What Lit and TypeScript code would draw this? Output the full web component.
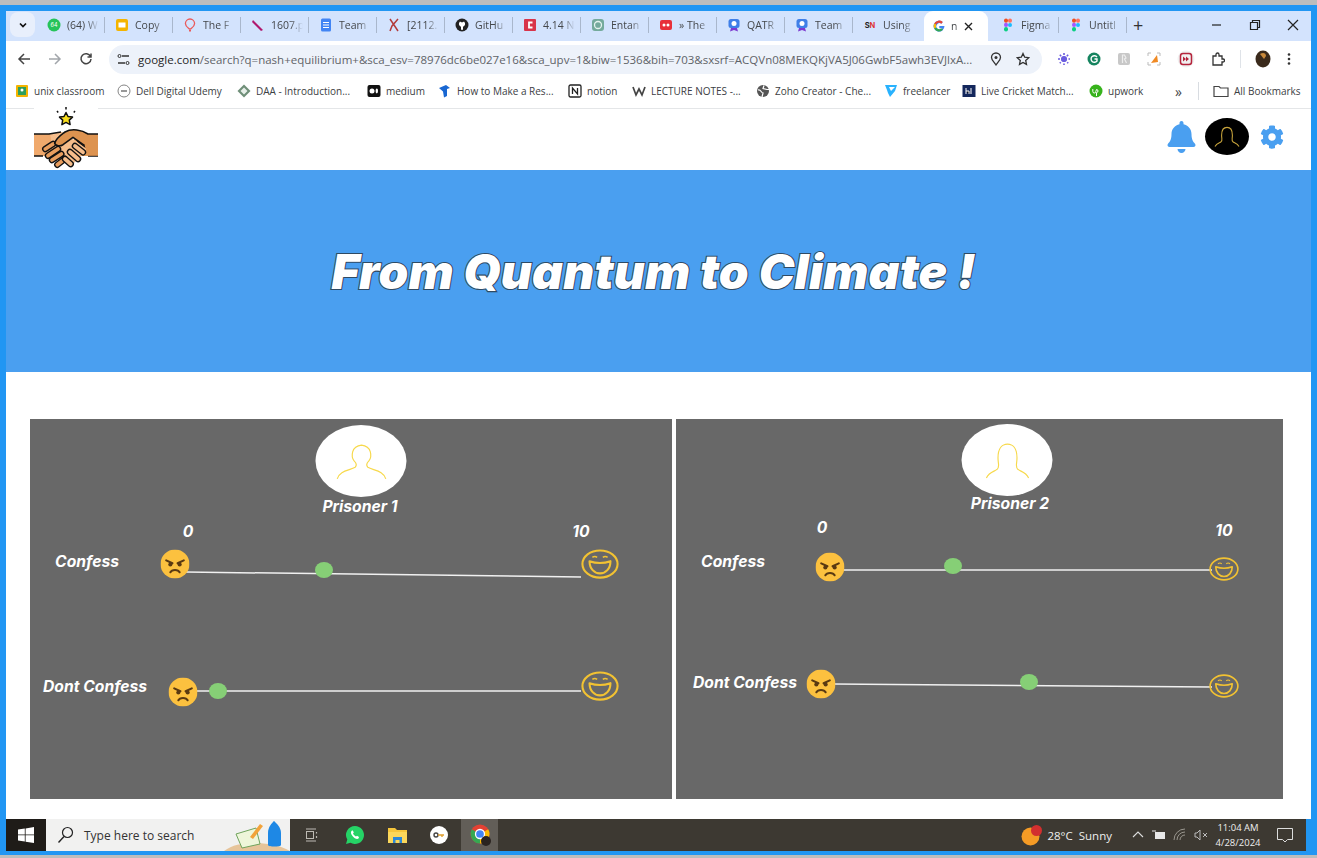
import { LitElement, html, css, svg } from 'lit';
import { customElement } from 'lit/decorators.js';

const favicons: Record<string, unknown> = {
  whatsapp: svg`<circle cx="7" cy="7" r="6.5" fill="#25c35a"/><text x="7" y="9" font-size="5.5" fill="#fff" text-anchor="middle" font-family="Inter">64</text>`,
  slides: svg`<rect x="1" y="1" width="12" height="12" rx="2" fill="#f4b400"/><rect x="3.5" y="4.5" width="7" height="5" fill="#fff"/>`,
  balloon: svg`<path d="M7 1a4.6 4.6 0 0 1 4.6 4.6C11.6 8.5 8.6 10 7.6 11H6.4C5.4 10 2.4 8.5 2.4 5.6A4.6 4.6 0 0 1 7 1z" fill="none" stroke="#ea5a5a" stroke-width="1.3"/><path d="M6 12h2v1.6H6z" fill="#ea5a5a"/>`,
  stroke: svg`<path d="M2 2l10 10-2 1L1 4z" fill="#b0186e"/>`,
  docs: svg`<rect x="2" y="0.5" width="10" height="13" rx="1.5" fill="#4285f4"/><path d="M4 4.5h6M4 7h6M4 9.5h6" stroke="#fff" stroke-width="1"/>`,
  arxiv: svg`<path d="M3 1l8 12M11 1L5 8l-2 5" fill="none" stroke="#b33a3a" stroke-width="1.5"/>`,
  github: svg`<circle cx="7" cy="7" r="6.5" fill="#222"/><path d="M4 5l1-1.5 1.2.7h1.6L9 3.5 10 5c.5 2-1 3.5-2 3.7v3H6V8.7C5 8.5 3.500 7 4 5z" fill="#fff"/>`,
  red: svg`<rect x="1" y="1" width="12" height="12" rx="1" fill="#d8344a"/><path d="M9.500 4.500H6v5h3.500" fill="none" stroke="#fff" stroke-width="1.800"/>`,
  openai: svg`<rect x="1" y="1" width="12" height="12" rx="3" fill="#74aa9c"/><circle cx="7" cy="7" r="3.500" fill="none" stroke="#e5f3ef" stroke-width="1.300"/>`,
  youtube: svg`<rect x="1" y="2" width="12" height="10" rx="2" fill="#e8303a"/><circle cx="5" cy="7" r="1.500" fill="#fff"/><circle cx="9" cy="7" r="1.500" fill="#fff"/>`,
  badge: svg`<rect x="1.500" y="1" width="11" height="9" rx="2.500" fill="#3f7fe8"/><circle cx="7" cy="5.500" r="2.500" fill="#fff"/><path d="M4 10l-1 3.500L7 12l4 1.500-1-3.500z" fill="#7d3ad0"/>`,
  sn: svg`<text x="7" y="9.500" font-size="7.500" font-weight="700" text-anchor="middle" fill="#222" font-family="Inter">S<tspan fill="#d33">N</tspan></text>`,
  google: svg`<path d="M12.500 7H7.300v2.200h3A3.200 3.200 0 1 1 9.300 4.700l1.500-1.600A5.500 5.500 0 1 0 12.500 7z" fill="#4285f4"/><path d="M2.200 4.500A5.500 5.500 0 0 1 10.800 3.100L9.300 4.700A3.200 3.200 0 0 0 4.200 5.600z" fill="#ea4335"/><path d="M2.200 9.500a5.500 5.500 0 0 1 0-5l2 1.100a3.200 3.200 0 0 0 0 2.800z" fill="#fbbc05"/><path d="M2.200 9.500l2-1.100a3.200 3.200 0 0 0 5 .9l1.800 1.500a5.500 5.500 0 0 1-8.800-1.300z" fill="#34a853"/>`,
  figma: svg`<rect x="3" y="0.500" width="4" height="4.300" rx="2" fill="#f24e1e"/><rect x="7" y="0.500" width="4" height="4.300" rx="2" fill="#ff7262"/><rect x="3" y="4.800" width="4" height="4.300" rx="2" fill="#a259ff"/><circle cx="9" cy="7" r="2" fill="#1abcfe"/><rect x="3" y="9.100" width="4" height="4.300" rx="2" fill="#0acf83"/>`,
};

const bookmarkIcons: Record<string, unknown> = {
  classroom: svg`<rect x="1" y="1" width="12" height="12" rx="1" fill="#f4b400"/><rect x="3" y="3" width="8" height="8" fill="#2f9e5c"/><circle cx="7" cy="6" r="1.500" fill="#fff"/>`,
  dell: svg`<circle cx="7" cy="7" r="6" fill="none" stroke="#777" stroke-width="0.900"/><path d="M4 7h6" stroke="#777" stroke-width="1.500"/>`,
  daa: svg`<path d="M7 .5L13.500 7 7 13.500.5 7z" fill="#6f8f78"/><path d="M7 3.500L10.500 7 7 10.500 3.500 7z" fill="#e7efe9"/>`,
  medium: svg`<rect x="0.500" y="1" width="13" height="12" rx="2" fill="#111"/><circle cx="5" cy="7" r="2.500" fill="#fff"/><ellipse cx="9.800" cy="7" rx="1.200" ry="2.400" fill="#fff"/>`,
  how: svg`<path d="M1 4l7-3 4 3-3 1v7l-3 1.500-1-6z" fill="#1967d2"/>`,
  notion: svg`<rect x="1" y="1" width="12" height="12" rx="1.500" fill="#fff" stroke="#222" stroke-width="1.300"/><path d="M4.500 10V4l5 6V4" fill="none" stroke="#222" stroke-width="1.300"/>`,
  w: svg`<path d="M1 3l3 8 3-6 3 6 3-8" fill="none" stroke="#444" stroke-width="1.700"/>`,
  zoho: svg`<circle cx="7" cy="7" r="6" fill="#555"/><path d="M2 6c3-1 3 3 5 3l-1 4M8 1.500l-1 3 4 1 2 0" fill="none" stroke="#fff" stroke-width="1.200"/>`,
  freelancer: svg`<path d="M1 1h12l-2 6-5 6-2-4-1-3z" fill="#29b2fe"/><path d="M5 3h6L7 7z" fill="#fff"/>`,
  cricket: svg`<rect x="0.500" y="1" width="13" height="12" fill="#14275c"/><path d="M4 4v6M4 7h3v3M9 4v6" stroke="#fff" stroke-width="1"/>`,
  upwork: svg`<circle cx="7" cy="7" r="6.500" fill="#37b31c"/><path d="M3.800 5v2.500a1.500 1.500 0 0 0 3 0L7.500 5.500a1.500 1.500 0 1 1 0 3V12" fill="none" stroke="#fff" stroke-width="1"/>`,
};

const tabs = [
  ['whatsapp', '(64) W'], ['slides', 'Copy'], ['balloon', 'The F'], ['stroke', '1607.p'],
  ['docs', 'Team'], ['arxiv', '[2112.'], ['github', 'GitHu'], ['red', '4.14 N'],
  ['openai', 'Entan'], ['youtube', '» The'], ['badge', 'QATR'], ['badge', 'Team'], ['sn', 'Using'],
];

const bookmarks = [
  ['classroom', 'unix classroom', 69], ['dell', 'Dell Digital Udemy', 87], ['daa', 'DAA - Introduction...', 97],
  ['medium', 'medium', 38], ['how', 'How to Make a Res...', 97], ['notion', 'notion', 31], ['w', 'LECTURE NOTES -...', 91],
  ['zoho', 'Zoho Creator - Che...', 95], ['freelancer', 'freelancer', 45], ['cricket', 'Live Cricket Match...', 94], ['upwork', 'upwork', 35],
] as const;

type Slider = {
  label: [number, number]; text: string; angry: [number, number];
  line: [number, number, number, number]; thumb: [number, number]; happy: [number, number, number, number];
};
type Prisoner = {
  name: string; hair: 'short' | 'long'; avatar: [number, number]; nameAt: [number, number];
  zero: [number, number]; ten: [number, number]; rows: Slider[];
};

// page coordinates of the prototype, measured minus the panel's own origin
const prisoners: Prisoner[] = [
  {
    name: 'Prisoner 1', hair: 'short', avatar: [331, 42], nameAt: [330, 88], zero: [158, 113], ten: [551, 113],
    rows: [
      { label: [57, 143], text: 'Confess', angry: [145, 145], line: [156, 153, 551, 158], thumb: [294, 151], happy: [570, 145, 19, 15] },
      { label: [65, 268], text: 'Dont Confess', angry: [153, 273], line: [165, 272, 551, 272], thumb: [188, 272], happy: [570, 267, 19, 15] },
    ],
  },
  {
    name: 'Prisoner 2', hair: 'long', avatar: [331, 41], nameAt: [334, 85], zero: [146, 109], ten: [548, 112],
    rows: [
      { label: [57, 143], text: 'Confess', angry: [154, 148], line: [167, 151, 536, 151], thumb: [277, 147], happy: [548, 150, 15, 12] },
      { label: [69, 264], text: 'Dont Confess', angry: [145, 265], line: [157, 265, 536, 268], thumb: [353, 263], happy: [548, 267, 15, 12] },
    ],
  },
];

const personPaths = {
  short: 'M2 34C4 26 14 26 19 23C21 21 20 19 18 17C15 13 15 3 25 2C35 3 35 13 32 17C30 19 29 21 31 23C36 26 46 26 48 34',
  long: 'M5 34C8 28 13 28 15 26C18 24 16 21 16 15C16 6 20 2 25 2C30 2 34 6 34 15C34 21 32 24 35 26C37 28 42 28 45 34',
};

// [tip x, tip y, base x, base y] for the fingers of the handshake logo
const darkFingers = [[11.3, 44, 19, 39], [14, 50.7, 24, 44], [18, 55, 27.3, 49], [23.3, 59.7, 30.7, 54]];
const lightFingers = [[52.3, 39.7, 46, 35], [49, 47.3, 41, 41], [44, 54, 36, 47], [36.7, 59, 31, 54]];

const finger = (f: number[], color: string) => svg`
  <line x1=${f[0]} y1=${f[1]} x2=${f[2]} y2=${f[3]} stroke="#111" stroke-width="6.500" stroke-linecap="round" />
  <line x1=${f[0]} y1=${f[1]} x2=${f[2]} y2=${f[3]} stroke=${color} stroke-width="3.800" stroke-linecap="round" />`;

@customElement('prisoner-panel')
export class PrisonerPanel extends LitElement {
  static properties = { data: { attribute: false } };
  data!: Prisoner;

  static styles = css`
    :host {
      display: block;
      position: relative;
      background: #686868;
      color: #fff;
      font: italic 700 15.700px Inter, "Liberation Sans", sans-serif;
      overflow: hidden;
    }
    .at {
      position: absolute;
      transform: translate(-50%, -50%);
      white-space: nowrap;
      line-height: 1;
    }
    .lines {
      position: absolute;
      inset: 0;
      width: 100%;
      height: 100%;
    }
    .avatar {
      width: 91px;
      height: 72px;
      border-radius: 50%;
      background: #fff;
      display: flex;
      align-items: center;
      justify-content: center;
    }
    .avatar svg {
      width: 54px;
      height: 38px;
      margin-top: 2px;
    }
    .thumb {
      width: 18px;
      height: 16px;
      border-radius: 50%;
      background: #86cf76;
    }
    .angry {
      width: 29px;
      height: 29px;
      display: block;
    }
    .happy {
      display: block;
    }
  `;

  private angry(x: number, y: number) {
    return html`<svg class="at angry" style="left:${x}px;top:${y}px" viewBox="0 0 28 28">
      <circle cx="14" cy="14" r="14" fill="#fcc13f" />
      <path d="M5.500 10.500l6 2.800M22.500 10.500l-6 2.800" stroke="#5a3a12" stroke-width="2" stroke-linecap="round" />
      <circle cx="9.500" cy="14.500" r="2" fill="#5a3a12" />
      <circle cx="18.500" cy="14.500" r="2" fill="#5a3a12" />
      <path d="M9.500 22c1.500-3 7.500-3 9 0" fill="none" stroke="#5a3a12" stroke-width="2" stroke-linecap="round" />
    </svg>`;
  }

  private happy(x: number, y: number, rx: number, ry: number) {
    return html`<svg class="at happy" style="left:${x}px;top:${y}px;width:${rx * 2}px;height:${ry * 2}px"
      viewBox="0 0 40 32" preserveAspectRatio="none">
      <ellipse cx="20" cy="16" rx="18.500" ry="14.500" fill="none" stroke="#f2c232" stroke-width="2.200" />
      <path d="M12 9q2.500-2 5 0M23 9q2.500-2 5 0" fill="none" stroke="#f2c232" stroke-width="1.600" />
      <path d="M9 13Q20 17 31 13C31 21 26 26 20 26S9 21 9 13z" fill="none" stroke="#f2c232" stroke-width="2.200" stroke-linejoin="round" />
    </svg>`;
  }

  render() {
    const d = this.data;
    return html`
      <svg class="lines">
        ${d.rows.map((r) => svg`<line x1=${r.line[0]} y1=${r.line[1]} x2=${r.line[2]} y2=${r.line[3]} stroke="#f1f1f1" stroke-width="1.500" />`)}
      </svg>
      <div class="at avatar" style="left:${d.avatar[0]}px;top:${d.avatar[1]}px">
        <svg viewBox="0 0 50 36"><path d=${personPaths[d.hair]} fill="none" stroke="#f7d94c" stroke-width="1.100" /></svg>
      </div>
      <div class="at" style="left:${d.nameAt[0]}px;top:${d.nameAt[1]}px">${d.name}</div>
      <div class="at" style="left:${d.zero[0]}px;top:${d.zero[1]}px">0</div>
      <div class="at" style="left:${d.ten[0]}px;top:${d.ten[1]}px">10</div>
      ${d.rows.map((r) => html`
        <div class="at" style="left:${r.label[0]}px;top:${r.label[1]}px">${r.text}</div>
        ${this.angry(r.angry[0], r.angry[1])}
        <div class="at thumb" style="left:${r.thumb[0]}px;top:${r.thumb[1]}px"></div>
        ${this.happy(r.happy[0], r.happy[1], r.happy[2], r.happy[3])}
      `)}
    `;
  }
}

@customElement('app-root')
export class AppRoot extends LitElement {
  static styles = css`
    :host {
      display: block;
      width: 1317px;
      height: 858px;
      overflow: hidden;
      background: #bdbdbd;
      font-family: "Open Sans", "Noto Sans", sans-serif;
      box-sizing: border-box;
      padding: 5px 0 3px;
    }
    .frame {
      height: 100%;
      box-sizing: border-box;
      background: #2196f3;
      padding: 6px 6px 4px 6px;
      display: flex;
      flex-direction: column;
    }
    svg {
      display: block;
      flex: none;
    }

    /* tab strip */
    .tabstrip {
      height: 30px;
      box-sizing: border-box;
      padding-bottom: 3px;
      flex: none;
      background: #d3e3fd;
      display: flex;
      align-items: center;
      font-size: 10.500px;
      color: #44474a;
    }
    .tab-menu {
      width: 25px;
      height: 25px;
      margin-left: 4px;
      margin-right: 2px;
      border-radius: 8px;
      background: #e8effc;
      display: flex;
      align-items: center;
      justify-content: center;
    }
    .tab {
      width: 68px;
      box-sizing: border-box;
      height: 16px;
      display: flex;
      align-items: center;
      gap: 6px;
      padding-left: 10px;
      border-right: 1px solid #a9b7cc;
      flex: none;
    }
    .tab:nth-child(14) {
      border-right: none;
    }
    .tab-title {
      width: 32px;
      white-space: nowrap;
      -webkit-mask-image: linear-gradient(90deg, #000 60%, transparent);
      mask-image: linear-gradient(90deg, #000 60%, transparent);
    }
    .tab.active {
      width: 64px;
      height: 30px;
      margin: 0 3px -3px;
      align-self: flex-end;
      padding-left: 8px;
      background: #fff;
      border: none;
      border-radius: 9px 9px 0 0;
      gap: 5px;
    }
    .active .tab-title {
      width: 8px;
    }
    .new-tab {
      margin-left: 6px;
      font-size: 18px;
      line-height: 1;
      color: #333;
    }
    .win-controls {
      margin-left: auto;
      display: flex;
      align-items: center;
      gap: 26px;
      padding-right: 12px;
    }

    /* toolbar */
    .toolbar {
      height: 36px;
      flex: none;
      background: #fff;
      display: flex;
      align-items: center;
      padding-left: 11px;
    }
    .nav {
      display: flex;
      gap: 17px;
      margin-right: 16px;
    }
    .omnibox {
      width: 933px;
      height: 29px;
      box-sizing: border-box;
      border-radius: 15px;
      background: #edf2fa;
      display: flex;
      align-items: center;
      padding: 0 12px 0 8px;
      font-size: 11.500px;
      color: #1f1f1f;
      flex: none;
    }
    .url {
      margin-left: 8px;
      width: 838px;
      white-space: nowrap;
    }
    .url span {
      color: #5f6368;
    }
    .omni-actions {
      margin-left: auto;
      display: flex;
      gap: 13px;
    }
    .extensions {
      display: flex;
      align-items: center;
      gap: 16px;
      margin-left: 15px;
    }
    .ext-sep {
      width: 1px;
      height: 18px;
      background: #dfe3e8;
      margin: 0 -2px 0 -1px;
    }

    /* bookmarks */
    .bookmarks {
      height: 32px;
      flex: none;
      box-sizing: border-box;
      background: #fff;
      border-bottom: 1px solid #e4e6e8;
      display: flex;
      align-items: center;
      padding: 0 0 3px 9px;
      gap: 14px;
      font-size: 10px;
      color: #3c4043;
    }
    .bookmark {
      display: flex;
      align-items: center;
      gap: 5px;
      white-space: nowrap;
      flex: none;
    }
    .more {
      margin-left: 18px;
      font-size: 14px;
      color: #444;
    }
    .bm-sep {
      width: 1px;
      height: 18px;
      background: #d8dce1;
      margin-left: 2px;
    }

    /* page */
    .page {
      flex: 1;
      background: #fff;
      display: flex;
      flex-direction: column;
      min-height: 0;
    }
    .app-header {
      height: 61px;
      flex: none;
      box-sizing: border-box;
      display: flex;
      align-items: center;
      padding: 0 27px 6px 28px;
    }
    .logo {
      align-self: flex-start;
      margin-top: -4px;
      background: #fff;
    }
    .header-actions {
      margin-left: auto;
      display: flex;
      align-items: center;
    }
    .me {
      width: 44px;
      height: 37px;
      border-radius: 50%;
      background: #000;
      margin: 0 11px 0 9px;
      display: flex;
      align-items: center;
      justify-content: center;
    }
    .hero {
      height: 202px;
      box-sizing: border-box;
      flex: none;
      background: #4a9ff0;
      display: flex;
      align-items: center;
      justify-content: center;
      padding: 2px 10px 0 0;
    }
    .hero h1 {
      margin: 0;
      color: #fff;
      font: italic 900 47.800px Inter, "Liberation Sans", sans-serif;
      letter-spacing: 0.2px;
      -webkit-text-stroke: 2.200px #2f4a63;
      paint-order: stroke fill;
    }
    .panels {
      flex: 1;
      padding: 47px 28px 20px 24px;
      display: grid;
      grid-template-columns: 642px 607px;
      gap: 4px;
      min-height: 0;
    }

    /* taskbar */
    .taskbar {
      height: 32px;
      flex: none;
      margin-right: 5px;
      background: #3d3932;
      display: flex;
      align-items: center;
      color: #eee;
      font-size: 11.500px;
    }
    .start {
      width: 40px;
      height: 100%;
      background: #1f1c18;
      display: flex;
      align-items: center;
      justify-content: center;
    }
    .search {
      width: 244px;
      height: 100%;
      box-sizing: border-box;
      background: #f1f1f0;
      display: flex;
      align-items: center;
      padding-left: 11px;
      gap: 10px;
      color: #333;
      font-size: 12px;
    }
    .search svg:last-child {
      margin-left: auto;
    }
    .task-apps {
      display: flex;
      align-items: center;
      height: 100%;
    }
    .task-app {
      width: 42px;
      height: 100%;
      display: flex;
      align-items: center;
      justify-content: center;
    }
    .task-app:first-child {
      margin-right: 2px;
    }
    .task-app.open {
      background: #625e58;
      width: 37px;
      box-sizing: border-box;
      padding-left: 3px;
      margin-left: 1px;
    }
    .tray {
      margin-left: auto;
      display: flex;
      align-items: center;
      padding-right: 13px;
    }
    .weather {
      display: flex;
      align-items: center;
      gap: 5px;
      margin-right: 19px;
    }
    .tray-icons {
      display: flex;
      align-items: center;
      gap: 7px;
    }
    .clock {
      font-size: 9.500px;
      line-height: 15px;
      text-align: center;
      width: 50px;
      margin: 0 14px 0 5px;
    }
  `;

  render() {
    return html`
      <div class="frame">
        <div class="tabstrip">
          <div class="tab-menu">
            <svg width="10" height="10" viewBox="0 0 10 10"><path d="M2 3.500l3 3 3-3" fill="none" stroke="#111" stroke-width="1.700" /></svg>
          </div>
          ${tabs.map(([icon, title]) => html`
            <div class="tab">
              <svg width="14" height="14" viewBox="0 0 14 14">${favicons[icon]}</svg>
              <span class="tab-title">${title}</span>
            </div>`)}
          <div class="tab active">
            <svg width="14" height="14" viewBox="0 0 14 14">${favicons.google}</svg>
            <span class="tab-title">n</span>
            <svg width="9" height="9" viewBox="0 0 9 9"><path d="M1 1l7 7M8 1L1 8" stroke="#222" stroke-width="1.400" /></svg>
          </div>
          <div class="tab">
            <svg width="14" height="14" viewBox="0 0 14 14">${favicons.figma}</svg>
            <span class="tab-title">Figma</span>
          </div>
          <div class="tab">
            <svg width="14" height="14" viewBox="0 0 14 14">${favicons.figma}</svg>
            <span class="tab-title">Untitl</span>
          </div>
          <span class="new-tab">+</span>
          <div class="win-controls">
            <svg width="12" height="12" viewBox="0 0 12 12"><path d="M1 6h9" stroke="#222" stroke-width="1.200" /></svg>
            <svg width="12" height="12" viewBox="0 0 12 12"><path d="M1.500 3.500h7v7h-7zM3.500 3.500v-2h7v7h-2" fill="none" stroke="#222" stroke-width="1.200" /></svg>
            <svg width="12" height="12" viewBox="0 0 12 12"><path d="M1 1l10 10M11 1L1 11" stroke="#222" stroke-width="1.200" /></svg>
          </div>
        </div>

        <div class="toolbar">
          <div class="nav">
            <svg width="14" height="14" viewBox="0 0 14 14"><path d="M13 7H2M7 2L2 7l5 5" fill="none" stroke="#444" stroke-width="1.500" /></svg>
            <svg width="14" height="14" viewBox="0 0 14 14"><path d="M1 7h11M7 2l5 5-5 5" fill="none" stroke="#a2a6ab" stroke-width="1.500" /></svg>
            <svg width="14" height="14" viewBox="0 0 14 14"><path d="M11.500 4.500A5 5 0 1 0 12 7M12 1.500v3.500H8.500" fill="none" stroke="#444" stroke-width="1.500" /></svg>
          </div>
          <div class="omnibox">
            <svg width="13" height="13" viewBox="0 0 13 13"><path d="M5 3h7M1 10h7" stroke="#333" stroke-width="1.300" /><circle cx="2.500" cy="3" r="1.500" fill="none" stroke="#333" /><circle cx="10.500" cy="10" r="1.500" fill="none" stroke="#333" /></svg>
            <div class="url">google.com<span>/search?q=nash+equilibrium+&amp;sca_esv=78976dc6be027e16&amp;sca_upv=1&amp;biw=1536&amp;bih=703&amp;sxsrf=ACQVn08MEKQKjVA5J06GwbF5awh3EVJlxA...</span></div>
            <div class="omni-actions">
              <svg width="14" height="14" viewBox="0 0 14 14"><path d="M7 13C5 10 2.500 8 2.500 5.500a4.500 4.500 0 0 1 9 0C11.500 8 9 10 7 13z" fill="none" stroke="#333" stroke-width="1.300" /><circle cx="7" cy="5.500" r="1.500" fill="#333" /></svg>
              <svg width="14" height="14" viewBox="0 0 14 14"><path d="M7 1.500l1.700 3.700 4 .5-3 2.700.8 4L7 10.500l-3.500 1.900.8-4-3-2.700 4-.5z" fill="none" stroke="#333" stroke-width="1.300" /></svg>
            </div>
          </div>
          <div class="extensions">
            <svg width="14" height="14" viewBox="0 0 14 14"><circle cx="7" cy="7" r="3" fill="#6a5cdf" /><path d="M7 1v12M1 7h12M2.800 2.800l8.400 8.400M11.200 2.800l-8.400 8.400" stroke="#6a5cdf" stroke-width="1.600" stroke-dasharray="2 1.500" /></svg>
            <svg width="14" height="14" viewBox="0 0 14 14"><circle cx="7" cy="7" r="6.500" fill="#15845f" /><path d="M10 5a3.300 3.300 0 1 0 0 4V7H7.500" fill="none" stroke="#fff" stroke-width="1.400" /></svg>
            <svg width="14" height="14" viewBox="0 0 14 14"><rect x="1" y="1" width="12" height="12" rx="2" fill="#c8c8c8" /><path d="M5.500 11V3h2l1.500 3-1.500 1 2 4" fill="none" stroke="#eee" stroke-width="1.200" /></svg>
            <svg width="14" height="14" viewBox="0 0 14 14"><path d="M1 4V1h3M10 1h3v3M13 10v3h-3M4 13H1v-3" fill="none" stroke="#bbb" /><path d="M4 11L10 3l1 7z" fill="#f08a24" /></svg>
            <svg width="18" height="18" viewBox="0 0 18 18"><circle cx="9" cy="9" r="8.500" fill="#f1f1f1" /><rect x="3.500" y="3.500" width="11" height="11" rx="2.500" fill="none" stroke="#b5243c" stroke-width="1.500" /><path d="M6 6.500l3 2.500-3 2.500zM9 6.500l3 2.500-3 2.500z" fill="#b5243c" /></svg>
            <svg width="14" height="14" viewBox="0 0 14 14"><path d="M2 4h3V2.500a1.500 1.500 0 0 1 3 0V4h3v3h1a1.500 1.500 0 0 1 0 3h-1v3H2z" fill="none" stroke="#333" stroke-width="1.300" /></svg>
            <div class="ext-sep"></div>
            <svg width="16" height="18" viewBox="0 0 16 18"><ellipse cx="8" cy="9" rx="7.500" ry="8.500" fill="#3a2a1c" /><path d="M5 4c3-2 6-1 6 2l-2 3z" fill="#c98a3c" /></svg>
            <svg width="4" height="14" viewBox="0 0 4 14"><circle cx="2" cy="2.500" r="1.300" fill="#333" /><circle cx="2" cy="7" r="1.300" fill="#333" /><circle cx="2" cy="11.500" r="1.300" fill="#333" /></svg>
          </div>
        </div>

        <div class="bookmarks">
          ${bookmarks.map(([icon, title, width]) => html`
            <div class="bookmark">
              <svg width="14" height="14" viewBox="0 0 14 14">${bookmarkIcons[icon]}</svg>
              <span style="width:${width}px">${title}</span>
            </div>`)}
          <span class="more">»</span>
          <div class="bm-sep"></div>
          <div class="bookmark">
            <svg width="16" height="14" viewBox="0 0 16 14"><path d="M1 2.500h5l1.500 1.500h7.500v8.500H1z" fill="none" stroke="#444" stroke-width="1.200" /></svg>
            <span>All Bookmarks</span>
          </div>
        </div>

        <div class="page">
          <header class="app-header">
            <svg class="logo" width="64" height="64" viewBox="0 0 64 64">
              <path d="M32 7.500l2 4 4.500.6-3.200 3 .8 4.500-4.100-2.200-4.100 2.200.8-4.500-3.200-3 4.500-.6z" fill="#fbe01d" stroke="#111" stroke-width="1.500" stroke-linejoin="round" />
              <path d="M32 2v2.500M23 6l1.200 1.500M41 6l-1.200 1.500" stroke="#111" stroke-width="1.500" />
              <rect y="29" width="26" height="22" fill="#f0a96c" />
              <rect x="40" y="29" width="24" height="22" fill="#e09a57" />
              <path d="M16 29L28 27 54 44 38 60 20 50z" fill="#f6bd8b" />
              <path d="M0 29h15l12-2M0 51h9M54 51h10" fill="none" stroke="#111" stroke-width="1.500" />
              ${darkFingers.map((f) => finger(f, '#e89d5e'))}
              ${lightFingers.map((f) => finger(f, '#f6bd8b'))}
              <path d="M64 29H54C48 25 38 23 31 27C27 30 22 33 20.700 38.300C22 41 26 41.500 29 39.700L39 32.300L50.700 40.700L54 50.700H64z" fill="#dd9350" />
              <path d="M64 29H54C48 25 38 23 31 27C27 30 22 33 20.700 38.300C22 41 26 41.500 29 39.700L39 32.300L50.700 40.700" fill="none" stroke="#111" stroke-width="1.600" stroke-linejoin="round" />
            </svg>
            <div class="header-actions">
              <svg width="29" height="32" viewBox="0 0 448 512"><path fill="#4a9ff0" d="M224 512c35.320 0 63.970-28.650 63.970-64H160.030c0 35.350 28.650 64 63.970 64zm215.390-149.710c-19.320-20.760-55.470-51.990-55.470-154.290 0-77.700-54.480-139.900-127.940-155.160V32c0-17.670-14.320-32-31.980-32s-31.980 14.330-31.980 32v20.840C118.560 68.100 64.080 130.300 64.080 208c0 102.300-36.150 133.530-55.470 154.290-6 6.450-8.660 14.160-8.610 21.710.11 16.400 12.980 32 32.100 32h383.800c19.120 0 32-15.600 32.100-32 .05-7.550-2.610-15.270-8.610-21.710z" /></svg>
              <div class="me">
                <svg width="30" height="24" viewBox="0 0 50 36"><path d=${personPaths.long} fill="none" stroke="#c9a53c" stroke-width="1.800" /></svg>
              </div>
              <svg width="24" height="26" viewBox="0 0 512 512"><path fill="#4a9ff0" d="M487.400 315.700l-42.600-24.600c4.300-23.200 4.300-47 0-70.200l42.600-24.600c4.900-2.800 7.100-8.600 5.500-14-11.100-35.600-30-67.800-54.700-94.600-3.800-4.100-10-5.100-14.800-2.300L380.800 110c-17.900-15.400-38.500-27.300-60.800-35.100V25.800c0-5.600-3.900-10.500-9.400-11.700-36.700-8.200-74.300-7.800-109.200 0-5.500 1.200-9.400 6.100-9.400 11.700V75c-22.200 7.900-42.800 19.800-60.800 35.100L88.700 85.500c-4.900-2.800-11-1.900-14.800 2.300-24.700 26.700-43.600 58.900-54.700 94.600-1.700 5.400.6 11.200 5.500 14L67.300 221c-4.300 23.200-4.300 47 0 70.200l-42.600 24.600c-4.900 2.800-7.100 8.600-5.500 14 11.100 35.600 30 67.800 54.700 94.600 3.800 4.100 10 5.100 14.800 2.300l42.600-24.600c17.900 15.400 38.500 27.300 60.800 35.100v49.200c0 5.600 3.900 10.500 9.400 11.700 36.700 8.200 74.300 7.800 109.200 0 5.500-1.200 9.400-6.100 9.400-11.700v-49.200c22.200-7.900 42.800-19.800 60.800-35.100l42.600 24.600c4.900 2.800 11 1.900 14.800-2.300 24.700-26.700 43.600-58.900 54.700-94.600 1.500-5.500-.7-11.300-5.600-14.100zM256 336c-44.100 0-80-35.900-80-80s35.900-80 80-80 80 35.900 80 80-35.900 80-80 80z" /></svg>
            </div>
          </header>
          <section class="hero"><h1>From Quantum to Climate !</h1></section>
          <section class="panels">
            ${prisoners.map((p) => html`<prisoner-panel .data=${p}></prisoner-panel>`)}
          </section>
        </div>

        <footer class="taskbar">
          <div class="start">
            <svg width="16" height="16" viewBox="0 0 16 16"><path d="M0 2.500l6.800-1v6H0zM7.600 1.400L16 0v7.500H7.600zM0 8.300h6.800v6.200l-6.800-1zM7.600 8.300H16V16l-8.400-1.300z" fill="#fff" /></svg>
          </div>
          <div class="search">
            <svg width="17" height="18" viewBox="0 0 17 18"><circle cx="10.500" cy="6.500" r="5" fill="none" stroke="#222" stroke-width="1.200" /><path d="M7 10.500L1.500 16.500" stroke="#222" stroke-width="1.400" /></svg>
            <span>Type here to search</span>
            <svg width="66" height="32" viewBox="0 0 66 32">
              <path d="M0 32c8-6 18-8 30-8s26 2 36 8z" fill="#e6c49a" />
              <path d="M12 15l20-6 4 16-18 4z" fill="#eef6da" stroke="#6fa35c" />
              <path d="M26 18L36 5l3 2-10 13z" fill="#f2a33a" />
              <path d="M44 26V14c0-6 4-10 6-12 2 2 7 6 7 12v12c0 2-13 2-13 0z" fill="#1e88e5" />
            </svg>
          </div>
          <div class="task-apps">
            <div class="task-app">
              <svg width="16" height="16" viewBox="0 0 16 16"><path d="M3 2h10M3 14h10" stroke="#bdbab3" stroke-width="1.200" /><rect x="3.500" y="4.500" width="7" height="7" fill="none" stroke="#bdbab3" /><path d="M13.500 5v1.500M13.500 9v2" stroke="#bdbab3" stroke-width="1.200" /></svg>
            </div>
            <div class="task-app">
              <svg width="20" height="20" viewBox="0 0 20 20"><path d="M10 1a9 9 0 0 0-7.700 13.600L1 19l4.500-1.200A9 9 0 1 0 10 1z" fill="#25d366" /><path d="M7 5.500c-1.500 1-1.500 3 .5 5.500s4.500 3.500 6 2.500l.5-1.500-2-1.200-1 .8c-1-.3-2.500-1.800-3-3l.8-1-1-2.200z" fill="#fff" /></svg>
            </div>
            <div class="task-app">
              <svg width="19" height="18" viewBox="0 0 19 18"><path d="M0 2h7l2 2h10v13H0z" fill="#f6c63c" /><path d="M0 6h19v11H0z" fill="#fbd75b" /><path d="M5 11h9v6h-2.500v-3h-4v3H5z" fill="#2b88d8" /></svg>
            </div>
            <div class="task-app">
              <svg width="18" height="18" viewBox="0 0 18 18"><circle cx="9" cy="9" r="9" fill="#fff" /><circle cx="6" cy="9" r="2" fill="none" stroke="#444" stroke-width="1.400" /><path d="M8 9h6M12 9v2" stroke="#e0a030" stroke-width="1.400" /></svg>
            </div>
            <div class="task-app open">
              <svg width="22" height="22" viewBox="0 0 22 22"><circle cx="10" cy="10" r="9.500" fill="#e34133" /><path d="M10 10L1.800 5.300A9.500 9.500 0 0 0 10 19.500z" fill="#36a852" /><path d="M10 10l8.200-4.700A9.500 9.500 0 0 1 10 19.500z" fill="#fbbc05" /><circle cx="10" cy="10" r="4.500" fill="#4285f4" stroke="#fff" stroke-width="1.300" /><circle cx="16" cy="17" r="5" fill="#2a2420" /></svg>
            </div>
          </div>
          <div class="tray">
            <div class="weather">
              <svg width="21" height="21" viewBox="0 0 21 21"><circle cx="9.500" cy="11.500" r="9" fill="#f59b25" /><circle cx="15.500" cy="5.500" r="5.500" fill="#d22f2f" /></svg>
              <span>28°C &nbsp;Sunny</span>
            </div>
            <div class="tray-icons">
              <svg width="14" height="14" viewBox="0 0 14 14"><path d="M2 9l5-5 5 5" fill="none" stroke="#ddd" stroke-width="1.100" /></svg>
              <svg width="14" height="14" viewBox="0 0 14 14"><rect x="3" y="4" width="10" height="7" fill="#e8e8e8" /><path d="M0 3h4" stroke="#e8e8e8" /></svg>
              <svg width="14" height="14" viewBox="0 0 14 14"><path d="M1 12a11 11 0 0 1 11-11M4 12a8 8 0 0 1 8-8M7 12a5 5 0 0 1 5-5" fill="none" stroke="#9a978f" /></svg>
              <svg width="14" height="14" viewBox="0 0 14 14"><path d="M1 5h2l3-3v10L3 9H1zM9 5l4 4M13 5L9 9" fill="none" stroke="#bbb" /></svg>
            </div>
            <div class="clock">11:04 AM<br />4/28/2024</div>
            <svg width="16" height="15" viewBox="0 0 16 15"><path d="M.5.500h15v11h-5L8 14l-2.500-2.500h-5z" fill="none" stroke="#ddd" /></svg>
          </div>
        </footer>
      </div>
    `;
  }
}
